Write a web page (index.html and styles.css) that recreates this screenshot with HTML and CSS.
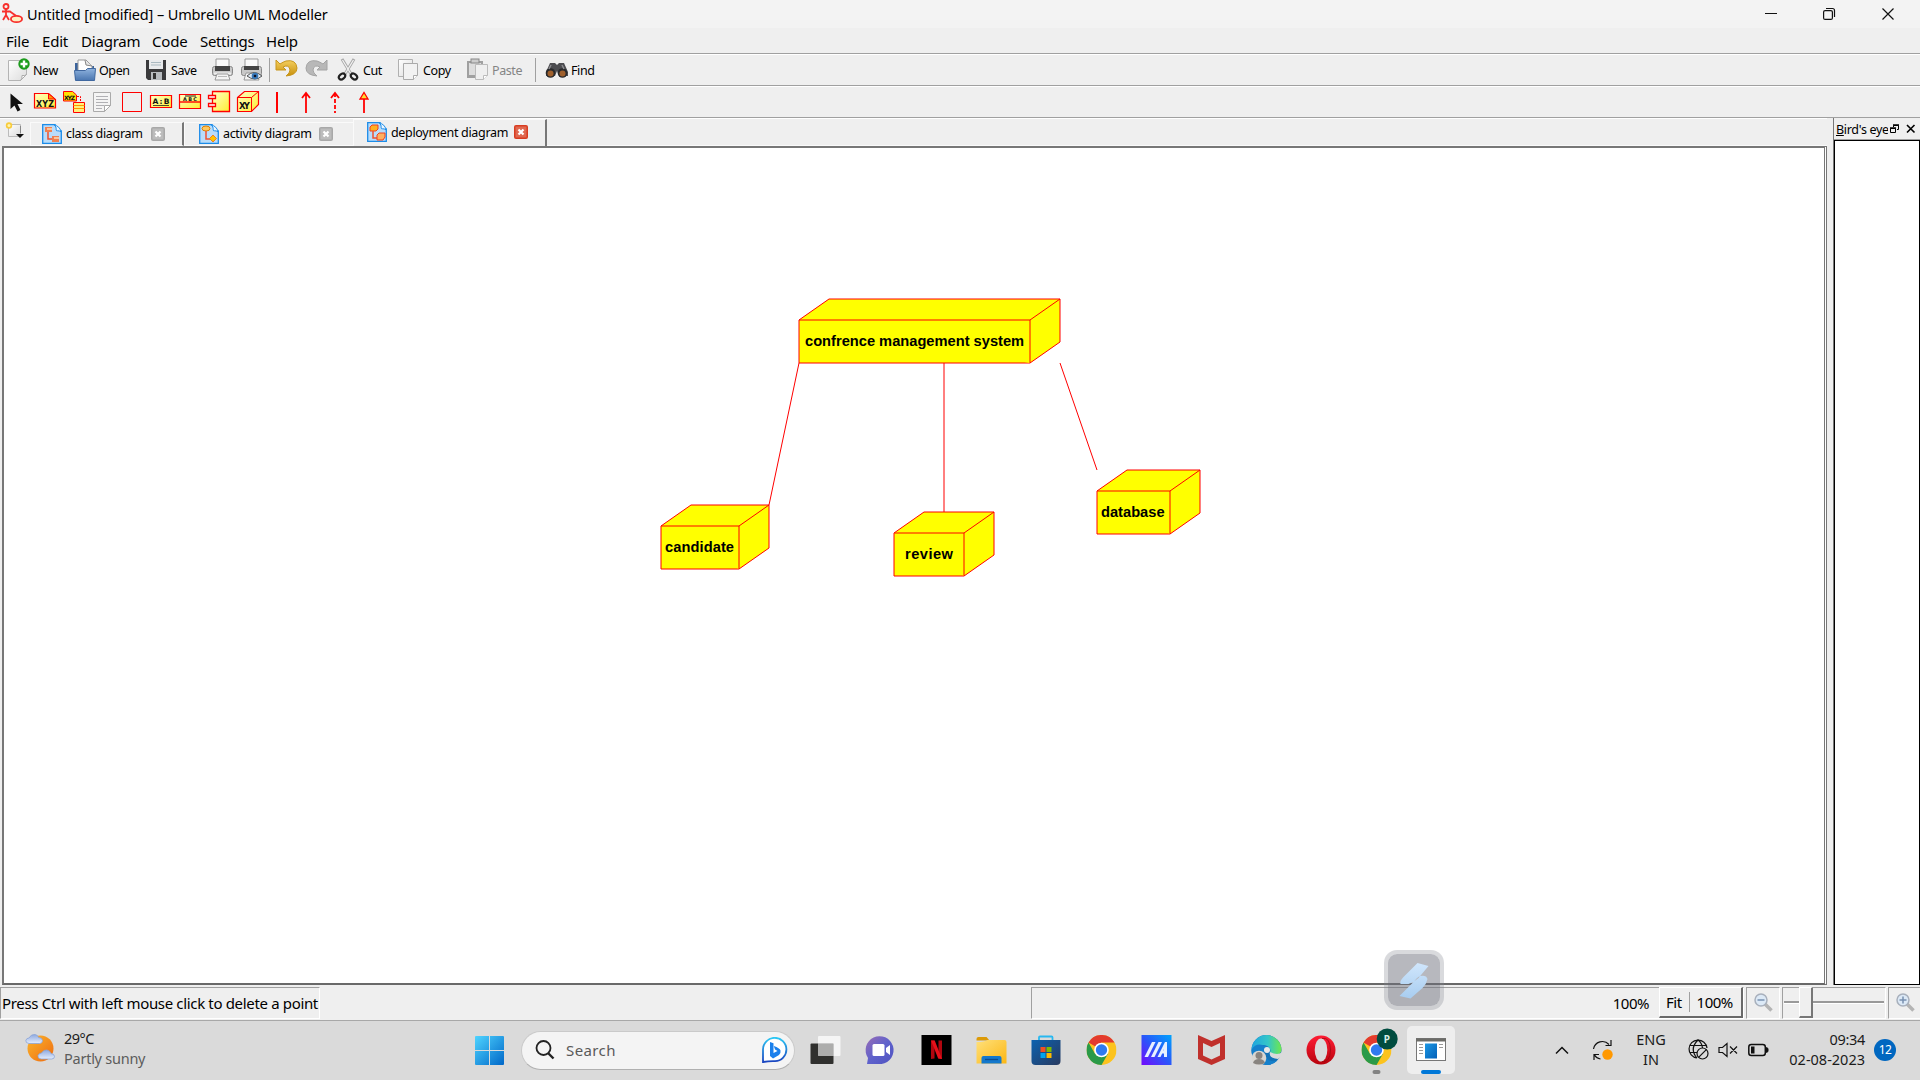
FILE: index.html
```html
<!DOCTYPE html>
<html lang="en">
<head>
<meta charset="utf-8">
<title>Untitled [modified] – Umbrello UML Modeller</title>
<link rel="stylesheet" href="styles.css">
</head>
<body>
<svg class="defs" width="0" height="0">
  <defs>
    <linearGradient id="paper" x1="0" y1="0" x2="1" y2="1"><stop offset="0" stop-color="#fff"/><stop offset="1" stop-color="#dcdcdc"/></linearGradient>
    <linearGradient id="folderBlue" x1="0" y1="0" x2="0" y2="1"><stop offset="0" stop-color="#8fb3de"/><stop offset="1" stop-color="#4a76b0"/></linearGradient>
    <linearGradient id="yel" x1="0" y1="0" x2="1" y2="1"><stop offset="0" stop-color="#ffffc8"/><stop offset="1" stop-color="#ffee30"/></linearGradient>
    <linearGradient id="gold" x1="0" y1="0" x2="0" y2="1"><stop offset="0" stop-color="#f5d060"/><stop offset="1" stop-color="#c8900c"/></linearGradient>
    <linearGradient id="win" gradientUnits="userSpaceOnUse" x1="0" y1="0" x2="29" y2="29"><stop offset="0" stop-color="#4fd4ff"/><stop offset="1" stop-color="#0067c8"/></linearGradient>
    <linearGradient id="sun" x1="0" y1="0" x2="1" y2="1"><stop offset="0" stop-color="#fbb62c"/><stop offset="1" stop-color="#ee6a10"/></linearGradient>
    <linearGradient id="cloud" x1="0" y1="0" x2="0" y2="1"><stop offset="0" stop-color="#8ea9e0"/><stop offset="1" stop-color="#e4edfc"/></linearGradient>
    <linearGradient id="bing" x1="0" y1="0" x2="0" y2="1"><stop offset="0" stop-color="#2cc8f4"/><stop offset="1" stop-color="#1a44c0"/></linearGradient>
    <linearGradient id="chat" x1="0" y1="0" x2="1" y2="1"><stop offset="0" stop-color="#9a6cb4"/><stop offset=".5" stop-color="#5f62cc"/><stop offset="1" stop-color="#4f52c0"/></linearGradient>
    <linearGradient id="fold" x1="0" y1="0" x2="1" y2="1"><stop offset="0" stop-color="#ffe07a"/><stop offset="1" stop-color="#fcb714"/></linearGradient>
    <linearGradient id="store" x1="0" y1="0" x2="1" y2="1"><stop offset="0" stop-color="#0c62b0"/><stop offset="1" stop-color="#283a60"/></linearGradient>
    <linearGradient id="armory" x1="1" y1="0" x2="0" y2="1"><stop offset="0" stop-color="#00a4fc"/><stop offset=".5" stop-color="#2a56fa"/><stop offset="1" stop-color="#7408fc"/></linearGradient>
    <linearGradient id="edgeTop" x1="0" y1="0" x2="1" y2="0"><stop offset="0" stop-color="#1fa4e0"/><stop offset=".55" stop-color="#34c6c8"/><stop offset="1" stop-color="#6ee84c"/></linearGradient>
    <linearGradient id="opera" x1="0" y1="0" x2="0" y2="1"><stop offset="0" stop-color="#ff1c34"/><stop offset="1" stop-color="#b8040e"/></linearGradient>
    <linearGradient id="appBlue" x1="0" y1="0" x2="1" y2="1"><stop offset="0" stop-color="#1c98e4"/><stop offset="1" stop-color="#0460b8"/></linearGradient>
    <linearGradient id="bolt" x1="0" y1="0" x2="0" y2="1"><stop offset="0" stop-color="#d0e6fc"/><stop offset="1" stop-color="#a8cdf0"/></linearGradient>
    <symbol id="pagelet" viewBox="0 0 20 20">
      <path d="M.7.7H13L19.3 7V19.3H.7Z" fill="#b9dcfa" stroke="#1c8ce8" stroke-width="1.3"/>
      <path d="M12 1c3 1 2 5 7 6V1Z" fill="#f0f0f0"/><path d="M12 .8c4 1 6 3 7.200 7-3-2-5 0-5-2S14 2 12 .8Z" fill="#eaf5ff" stroke="#1c8ce8"/>
    </symbol>
    <symbol id="close" viewBox="0 0 14 14"><rect width="14" height="14" rx="2" fill="#a8a8a8"/><rect x="1.500" y="1.500" width="11" height="11" fill="#bcbcbc"/><path d="M4.500 4.500l5 5m0-5l-5 5" stroke="#fff" stroke-width="2.200"/></symbol>
    <symbol id="chrome" viewBox="0 0 30 30">
      <circle cx="15" cy="15" r="15" fill="#fcc31e"/>
      <path d="M15 15L2 7.500A15 15 0 0 1 28 7.500H15Z" fill="#e33b2e"/>
      <path d="M2 7.500A15 15 0 0 0 15 30L21.500 18.700 15 15 8.500 18.700Z" fill="#2a9a48"/>
      <circle cx="15" cy="15" r="7.300" fill="#fff"/><circle cx="15" cy="15" r="5.700" fill="#2f7af0"/>
    </symbol>
  </defs>
</svg>

<div class="window">
  <header class="titlebar">
    <svg class="app-icon" width="22" height="22" viewBox="0 0 22 22"><g fill="none" stroke="#f8302c" stroke-width="1.800"><circle cx="4" cy="3.500" r="2.500"/><path d="M4 6v6M0 8.500h8.500M1 17l3-5 3 5M8 8.500l7 5"/><ellipse cx="14.500" cy="16" rx="5.600" ry="3.200" fill="#fff0c0"/></g></svg>
    <span class="title-text">Untitled [modified] – Umbrello UML Modeller</span>
    <div class="win-controls">
      <svg width="58" height="28"><path d="M20 13.500h12" stroke="#111"/></svg>
      <svg width="58" height="28"><g fill="none" stroke="#111" stroke-width="1.200"><rect x="19.600" y="10.600" width="8.800" height="8.800" rx="1.500"/><path d="M22 8.500h6.500q2 0 2 2V17"/></g></svg>
      <svg width="58" height="28"><path d="M20.500 8.500l11 11m0-11l-11 11" stroke="#111" stroke-width="1.200"/></svg>
    </div>
  </header>

  <nav class="menubar">
    <span class="m-file">File</span><span class="m-edit">Edit</span><span class="m-diagram">Diagram</span><span class="m-code">Code</span><span class="m-settings">Settings</span><span class="m-help">Help</span>
  </nav>

  <div class="toolbar main-tools">
    <div class="tool w66"><svg width="24" height="24"><path d="M1.500 2.500h18v14l-6 6h-12Z" fill="url(#paper)" stroke="#b4b4b4"/><path d="M13.500 22.500q2-2 1.500-5 3 .5 4.500-1Z" fill="#fff" stroke="#aaa"/><circle cx="17" cy="6" r="5.700" fill="#1c9c1c"/><path d="M17 2.500v7M13.500 6h7" stroke="#fff" stroke-width="2.400"/></svg><span>New</span></div>
    <div class="tool w72"><svg width="24" height="24"><path d="M2 5h6l3 3h10v14H2Z" fill="#3c649c"/><path d="M5 14V2h8l6 6v7" fill="#fff" stroke="#999"/><path d="M12 2l1 5 6 1" fill="#e4e4e4" stroke="#888"/><path d="M1.500 12.500h11l2-2h8l-1 12h-19Z" fill="url(#folderBlue)" stroke="#4068a0"/></svg><span>Open</span></div>
    <div class="tool w66"><svg width="24" height="24"><path d="M1 2h20v20H3l-2-2Z" fill="#3a3a3c"/><rect x="4" y="2" width="14" height="9" fill="#e8eaec"/><path d="M6 4.500h10M6 7h10" stroke="#a8b8c0"/><rect x="6" y="14" width="11" height="8" fill="#b8bcc0"/><rect x="8" y="15" width="3" height="6" fill="#333"/></svg><span>Save</span></div>
    <div class="tool w29"><svg width="24" height="24"><path d="M5 9V1h13v8" fill="#fafafa" stroke="#999"/><rect x="1.500" y="8.500" width="20" height="9" rx="2" fill="#c8c8c8" stroke="#888"/><rect x="4" y="8" width="15" height="5" fill="#444"/><path d="M3 15.500h17" stroke="#eee" stroke-width="2"/><path d="M6 16h11l2 6H4Z" fill="#f4f4f4" stroke="#999"/><path d="M7 18.500h9" stroke="#bbb"/></svg></div>
    <div class="tool w29"><svg width="24" height="24"><path d="M5 9V1h13v8" fill="#fafafa" stroke="#999"/><rect x="1.500" y="8.500" width="20" height="9" rx="2" fill="#c8c8c8" stroke="#888"/><rect x="4" y="8" width="15" height="4" fill="#444"/><path d="M6 15h11l2 7H4Z" fill="#f4f4f4" stroke="#999"/><path d="M7 18q7-7 15 0-7 6-15 0Z" fill="#dce8f4" stroke="#555"/><circle cx="15" cy="18" r="3.300" fill="#3878b8"/><circle cx="15" cy="18" r="1.300" fill="#112"/></svg></div>
    <i class="sep"></i>
    <div class="tool w30"><svg width="24" height="24"><path d="M1 2v10h10L8 9q6-3 7 3 0 3-4 6 11-1 11-8Q21 1 11 3q-3 1-6 3Z" fill="url(#gold)" stroke="#c8961c"/></svg></div>
    <div class="tool w32"><svg width="24" height="24"><path d="M22 2v10H12l3-3q-6-3-7 3 0 3 4 6Q1 17 1 10 2 1 12 3q3 1 6 3Z" fill="#b8b8b8" stroke="#a4a4a4"/></svg></div>
    <div class="tool w60"><svg width="24" height="24"><path d="M5 1l9 15M17 1L8 16" stroke="#a8a8a8" stroke-width="3"/><path d="M5.500 2l8.500 14M16.500 2L8 16" stroke="#f4f4f4" stroke-width="1.200"/><g fill="none" stroke="#222" stroke-width="2.200"><ellipse cx="5" cy="18.500" rx="3.500" ry="2.500" transform="rotate(-40 5 18.500)"/><ellipse cx="17" cy="18.500" rx="3.500" ry="2.500" transform="rotate(40 17 18.500)"/></g></svg><span>Cut</span></div>
    <div class="tool w69"><svg width="24" height="24"><path d="M1.500 1.500h14v17h-14Z" fill="url(#paper)" stroke="#b0b0b0"/><path d="M6.500 5.500h14v12l-4 4h-10Z" fill="#f2f2f2" stroke="#aaa"/><path d="M16.500 21.500v-4h4" fill="#fff" stroke="#aaa"/></svg><span>Copy</span></div>
    <div class="tool off w68"><svg width="24" height="24"><path d="M1 3h16v17H1Z" fill="#a0a0a0"/><path d="M3 5h12v12H3Z" fill="#ddd"/><rect x="5" y="1" width="8" height="4" fill="#ccc" stroke="#888"/><path d="M9.500 6.500h12v11l-4 4h-8Z" fill="#efefef" stroke="#bbb"/><path d="M17.500 21.500v-4h4" fill="#fff" stroke="#bbb"/></svg><span>Paste</span></div>
    <i class="sep wide"></i>
    <div class="tool"><svg width="24" height="24"><path d="M5 5h5l2 2 2-2h5l4 9v4h-9l-2-5-2 5H1v-4Z" fill="#4c4c50"/><circle cx="5.500" cy="15" r="4.800" fill="#2a2a2c"/><circle cx="17.500" cy="15" r="4.800" fill="#2a2a2c"/><circle cx="5.500" cy="15.500" r="3" fill="#a0602c"/><circle cx="17.500" cy="15.500" r="3" fill="#a0602c"/><path d="M6 7l-2 4M17 7l2 4" stroke="#8c8c90" stroke-width="1.500"/></svg><span>Find</span></div>
  </div>

  <div class="toolbar shape-tools">
    <svg width="29" height="24"><path d="M8.500 3.500v15.500l4-3.500 3 6 3-1.500-3-6h5.500Z" fill="#111"/></svg>
    <svg width="29" height="24"><path d="M3.500 3.500h14l7 6v8.500h-21Z" fill="url(#yel)" stroke="#f00" stroke-width="1.200"/><path d="M17.500 3.500v5.500h6.500Z" fill="#ff9a00" stroke="#f00"/><text class="glyph" x="5" y="17" font-size="8" textLength="18">XYZ</text></svg>
    <svg width="29" height="24"><path d="M3.500 1.500h9l4 3.500v6h-13Z" fill="#ffe000" stroke="#f00"/><text class="glyph" x="4" y="9.500" font-size="6" textLength="11">XYZ</text><path d="M17 6.500h3.500v5" fill="none" stroke="#f00" stroke-dasharray="2 1"/><path d="M13.500 12.500h11v10h-11Z" fill="#fff27c" stroke="#f00"/><path d="M13.500 15.500h11M13.500 18.500h11" stroke="#f90"/></svg>
    <svg width="29" height="24"><path d="M4.500 2.500h17v13l-6 6h-11Z" fill="#f4f4f4" stroke="#aaa"/><path d="M7 6.500h12M7 9.500h12M7 12.500h12M7 15.500h8M7 18.500h6" stroke="#b0b0b4"/><path d="M15.500 21.500v-6h6Z" fill="#fff" stroke="#aaa"/></svg>
    <svg width="29" height="24"><path d="M4.500 2.500h19v19h-19Z" fill="none" stroke="#f00"/></svg>
    <svg width="29" height="24"><path d="M3.500 5.500h21v12h-21Z" fill="url(#yel)" stroke="#f00" stroke-width="1.200"/><text class="glyph" x="5.500" y="14" font-size="7.500" textLength="17">A:B</text><path d="M6 15.500h16" stroke="#222" stroke-width=".8"/></svg>
    <svg width="29" height="24"><path d="M3.500 4.500h21v14h-21Z" fill="url(#yel)" stroke="#f00" stroke-width="1.200"/><path d="M3 12h22" stroke="#f00" stroke-width="1.400"/><text class="glyph" x="7" y="11" font-size="5" textLength="14">ABC</text><path d="M9 6h11" stroke="#222"/></svg>
    <svg width="29" height="24"><path d="M7.500 1.500h17v20h-17Z" fill="url(#yel)" stroke="#f00" stroke-width="1.300"/><path d="M3.500 5.500h7v3h-7ZM3.500 13.500h7v3h-7Z" fill="#fff" stroke="#f00" stroke-width="1.300"/></svg>
    <svg width="29" height="24"><path d="M3.500 7.500l7-6h14v13l-7 7h-14Z" fill="url(#yel)" stroke="#f00" stroke-width="1.200"/><path d="M3.500 7.500h14v14M17.500 7.500l7-6" fill="none" stroke="#f00"/><text class="glyph" x="5" y="18.500" font-size="8.500" textLength="11">XY</text></svg>
    <svg width="29" height="24"><path d="M14 2v21" stroke="#f00" stroke-width="2"/></svg>
    <svg width="29" height="24"><path d="M14 3v20M10 8l4-5 4 5" fill="none" stroke="#f00" stroke-width="1.800"/></svg>
    <svg width="29" height="24"><path d="M14 3v20" stroke="#f00" stroke-width="1.800" stroke-dasharray="4 2"/><path d="M10 8l4-5 4 5" fill="none" stroke="#f00" stroke-width="1.800"/></svg>
    <svg width="29" height="24"><path d="M14 9v14" stroke="#f00" stroke-width="1.800"/><path d="M10 9l4-6.500 4 6.500Z" fill="#fd3" stroke="#f00" stroke-width="1.300"/></svg>
  </div>

  <main class="work">
    <section class="editor">
      <div class="tabs">
        <div class="newtab"><svg width="20" height="20"><path d="M3.500 2.500h12v12h-12Z" fill="url(#paper)" stroke="#bbb"/><path d="M15.500 4v7" stroke="#888"/><circle cx="4" cy="3.500" r="3.200" fill="#f8cc3c"/><circle cx="4" cy="3.500" r="1.500" fill="#fff4b0"/><path d="M11 12h8l-4 4Z" fill="#111"/></svg></div>
        <div class="tab t1"><svg width="20" height="20"><use href="#pagelet"/><path d="M3 3h7v5H3ZM10 12h7v6h-7Z" fill="#f08050"/><path d="M5 4h5v2H5ZM12 13h5v2h-5Z" fill="#fbc49c"/><path d="M6 8v7h4" fill="none" stroke="#f05030" stroke-width="1.500"/></svg><span>class diagram</span><svg class="x" width="14" height="14"><use href="#close"/></svg></div>
        <div class="tab t2"><svg width="20" height="20"><use href="#pagelet"/><ellipse cx="7" cy="4.500" rx="4" ry="2.500" fill="#fdc860" stroke="#e08000"/><path d="M7 7v8h4" fill="none" stroke="#f05030" stroke-width="1.500"/><path d="M14 11l3.500 3.500-3.500 3.500-3.500-3.500Z" fill="#ffc400" stroke="#f08020"/></svg><span>activity diagram</span><svg class="x" width="14" height="14"><use href="#close"/></svg></div>
        <div class="tab active"><svg width="20" height="20"><use href="#pagelet"/><path d="M3 5l2-2h6v4L9 9H3Z" fill="#ffb020" stroke="#f04020"/><path d="M6 9v7h4" fill="none" stroke="#f05030" stroke-width="1.500"/><path d="M10 13l2-2h6v4l-2 3h-6Z" fill="#ffb060" stroke="#f04020"/></svg><span>deployment diagram</span><svg class="x" width="14" height="14"><rect width="14" height="14" rx="2" fill="#d83c20"/><rect x="1.500" y="1.500" width="11" height="11" fill="#e06850"/><path d="M4.500 4.500l5 5m0-5l-5 5" stroke="#fff" stroke-width="2.200"/></svg></div>
        <div class="tab-rest"></div>
      </div>
      <div class="canvas">
        <svg width="1820" height="833" viewBox="4 148 1820 833">
          <g class="node">
            <path d="M799 320L829 299H1060V342L1030 363H799Z"/><path d="M799 320H1030V363M1030 320L1060 299"/>
            <path d="M661 526L691 505H769V548L739 569H661Z"/><path d="M661 526H739V569M739 526L769 505"/>
            <path d="M894 533L924 512H994V555L964 576H894Z"/><path d="M894 533H964V576M964 533L994 512"/>
            <path d="M1097 491L1127 470H1200V513L1170 534H1097Z"/><path d="M1097 491H1170V534M1170 491L1200 470"/>
          </g>
          <path class="link" d="M799 363L769 505M944 363V512M1060 363L1097 470"/>
          <g class="node-name">
            <text x="805" y="346">confrence management system</text>
            <text x="665" y="552" textLength="69">candidate</text>
            <text x="905" y="559" textLength="48">review</text>
            <text x="1101" y="517">database</text>
          </g>
        </svg>
      </div>
    </section>
    <aside class="dock">
      <div class="dock-title"><span class="dock-name"><u>B</u>ird's eye</span>
        <svg width="10" height="10"><path d="M3.500 3V1.500h5V5.500H7M.5 4.500h5v4h-5Z" fill="none" stroke="#000"/><path d="M3 1h6M0 4h6" stroke="#000" stroke-width="1.500"/></svg>
        <svg width="10" height="10"><path d="M1 1l7.500 7.500m0-7.500L1 8.500" stroke="#000" stroke-width="1.600"/></svg>
      </div>
      <div class="dock-view"></div>
    </aside>
  </main>

  <footer class="status">
    <div class="cell msg">Press Ctrl with left mouse click to delete a point</div>
    <div class="cell zoom-cell"><span class="pct">100%</span><div class="fit"><span class="fit-label">Fit</span><i></i><span>100%</span></div></div>
    <div class="cell zout"><svg width="20" height="20"><path d="M11 11l6.500 6.500" stroke="#b4b4b4" stroke-width="3.500"/><circle cx="7" cy="7" r="6" fill="#dce9f6" stroke="#a8b0bc" stroke-width="1.500"/><path d="M3.500 7h7" stroke="#7890b0" stroke-width="1.500"/></svg></div>
    <div class="cell slider"><i class="groove"></i><i class="thumb"></i></div>
    <div class="cell zin"><svg width="20" height="20"><path d="M11 11l6.500 6.500" stroke="#b4b4b4" stroke-width="3.500"/><circle cx="7" cy="7" r="6" fill="#dce9f6" stroke="#a8b0bc" stroke-width="1.500"/><path d="M3.500 7h7M7 3.500v7" stroke="#7890b0" stroke-width="1.500"/></svg></div>
  </footer>
</div>

<footer class="taskbar">
  <div class="weather">
    <svg width="32" height="32"><circle cx="15.500" cy="15.500" r="13" fill="url(#sun)"/><path d="M4 10.500q-3.500-.5-3.200-3Q1.500 5 4 5q2-4 6-3.500Q13 2 13.500 4.500q3.500 0 4 3 0 3-3 3Z" fill="url(#cloud)" stroke="#8aa4d8" stroke-width=".8"/><path d="M16 26q-3.500-.5-3-3.500Q14 20 16.500 20q2-3.500 5.500-3 3 .5 4 3.500 3.500.5 3.500 3 0 2.500-3 2.500Z" fill="url(#cloud)" stroke="#8aa4d8" stroke-width=".8"/></svg>
    <div class="weather-text"><span class="temp">29°C</span><span class="sky">Partly sunny</span></div>
  </div>
  <svg class="start" width="29" height="29"><g fill="url(#win)"><path d="M1 0h13v14H0V1q0-1 1-1ZM15 0h13q1 0 1 1v13H15ZM0 15h14v14H1q-1 0-1-1ZM15 15h14v13q0 1-1 1H15Z"/></g></svg>
  <div class="search">
    <svg width="20" height="20"><circle cx="8.500" cy="8" r="7" fill="none" stroke="#222" stroke-width="1.800"/><path d="M13 13l5.500 5.500" stroke="#222" stroke-width="2.400"/></svg>
    <span>Search</span>
    <svg width="26" height="26"><path d="M1 25V12.500A11.700 11.700 0 1 1 13 24.200Q7 24 1 25Z" fill="#fff" stroke="url(#bing)" stroke-width="1.800"/><path d="M8 5l3.500 1.300V16l4-2-2.500-1.500-1.200-3.500q6 2 6.700 4.500.5 3-1.500 4.500l-6 3.500L8 19Z" fill="#1c80ec"/></svg>
  </div>
  <div class="apps">
    <svg width="55" height="40"><rect x="11.500" y="13.500" width="23" height="20.500" rx="1" fill="#30302e"/><rect x="19" y="6" width="22.500" height="20" rx="1" fill="#fff" fill-opacity=".72"/><rect x="19" y="13.500" width="15.500" height="12.500" fill="#a4a4a4" fill-opacity=".75"/></svg>
    <svg width="55" height="40"><path d="M13 34l1-6A14 14 0 1 1 27.500 34Z" fill="url(#chat)"/><rect x="18.500" y="14" width="12" height="12" rx="1.500" fill="#fff"/><path d="M32 18l4-3v10l-4-3Z" fill="#fff"/></svg>
    <svg width="55" height="40"><path d="M12.500 5h30v30h-30Z" fill="#000"/><path d="M22 10.500h3.500v18l-3.500.5ZM29.500 10.500H33V29l-3.500-.5Z" fill="#b1060f"/><path d="M22 10.500h3.700L33 29l-3.800-.5Z" fill="#e8101a"/></svg>
    <svg width="55" height="40"><path d="M12.500 9q0-2 2-2h8l3 3.500h-13Z" fill="#dc9a08"/><path d="M12.500 12q8 0 11-2h17q2 0 2 2v21.500h-30Z" fill="url(#fold)"/><path d="M17.500 33.500V28q0-2 2-2h16q2 0 2 2v5.500Z" fill="#1478cc"/><path d="M21 29.500h13" stroke="#0c4c90" stroke-width="1.300"/></svg>
    <svg width="55" height="40"><path d="M20 11V7.500q0-1 1-1h11.500q1 0 1 1V11" fill="none" stroke="#28b8f0" stroke-width="1.800"/><path d="M12.500 10h29v21q0 4-4 4h-21q-4 0-4-4Z" fill="url(#store)"/><path d="M21.500 17h5v5h-5Z" fill="#f25022"/><path d="M27.500 17h5v5h-5Z" fill="#7fba00"/><path d="M21.500 23h5v5h-5Z" fill="#00a4ef"/><path d="M27.500 23h5v5h-5Z" fill="#ffb900"/></svg>
    <svg width="55" height="40"><use href="#chrome" x="12.500" y="5" width="30" height="30"/></svg>
    <svg width="55" height="40"><path d="M12.500 5h30v30h-30Z" fill="url(#armory)"/><path d="M15.500 27l7.500-15h3.500L19 27ZM22 27l7.500-15H33L25.500 27Z" fill="#e8f0ff"/><path d="M28.500 27L36 12h2v15h-3v-3.500h-1.800L31.500 27ZM34.500 20.500h.5v-1.500Z" fill="#e8f0ff"/></svg>
    <svg width="55" height="40"><path d="M14 5l13.500 6L41 5v24l-13.500 6L14 29Z" fill="#c0302c"/><path d="M19 13l8.500 4 8.500-4v12.500l-8.500 4-8.500-4Z" fill="#dadada"/></svg>
    <svg width="55" height="40"><circle cx="27.500" cy="20" r="15" fill="#1272b8"/><path d="M12.500 20a15 15 0 0 1 30 0q-1 6-8 5-5-1-3-4 0-5-7-6-9 0-12 5Z" fill="url(#edgeTop)"/><path d="M12.500 20q4-7 11-5 7 1 8 6-1-3-4-2-4 2-2 7 4 7 13 4.500-5 5-12 4.500Q12 32 12.500 20Z" fill="#1580cc"/><path d="M31 22q-2 6 8 7l4-3v-4q-4 4-12 0Z" fill="#dadada"/><circle cx="28" cy="20" r="3" fill="#e8e8e8"/><circle cx="20" cy="28" r="7.300" fill="#d8d6d2"/><circle cx="20" cy="25.500" r="3.500" fill="#888480"/><path d="M14 33q1-4 6-4t6 4q-6 3-12 0Z" fill="#888480"/></svg>
    <svg width="55" height="40"><circle cx="27" cy="20" r="14.500" fill="url(#opera)"/><ellipse cx="27" cy="20" rx="6.300" ry="11.500" fill="#dadada"/><path d="M28 8.500q8-2 8.500 11.500-.5 13-8.500 11.500" fill="none" stroke="#980810" stroke-width=".7"/></svg>
    <div class="profile"><svg width="55" height="58"><use href="#chrome" x="12.500" y="14" width="30" height="30"/><circle cx="38.200" cy="18" r="10.500" fill="#004c3f"/><text x="34.700" y="22" class="profile-p">P</text><rect x="23.500" y="49" width="8" height="4" rx="2" fill="#838383"/></svg></div>
    <div class="current"><svg width="48" height="48"><rect x="9.500" y="12.500" width="29" height="22" fill="#fff" stroke="#777"/><path d="M9 14h30" stroke="#6c6c68" stroke-width="3"/><rect x="18" y="17.500" width="12" height="15" fill="url(#appBlue)"/><path d="M12 18.500h4M12 21.500h4M12 24.500h4M12 27.500h4M32 18.500h4M32 21.500h4" stroke="#999"/><rect x="14" y="44" width="20" height="4" rx="2" fill="#0078d8"/></svg></div>
  </div>
  <div class="tray">
    <svg class="chev" width="16" height="12"><path d="M2 9.500l6-6 6 6" fill="none" stroke="#111" stroke-width="1.500"/></svg>
    <svg class="sync" width="22" height="22"><path d="M1.500 10A9 9 0 0 1 17 5.500M19 1v5.500h-5.500M7 15.500H2V21M2.500 16q2 3.500 6 4" fill="none" stroke="#111" stroke-width="1.200"/><circle cx="15.500" cy="15.500" r="5.200" fill="#ff9800"/></svg>
    <div class="lang"><span>ENG</span><span>IN</span></div>
    <svg class="net" width="22" height="22"><g fill="none" stroke="#111" stroke-width="1.200"><path d="M19 9A9 9 0 1 0 9 19M10 1q-9 9-1 18M10 1q4 3 4.500 8M2 6.500h16M2 13.500h7"/><circle cx="14.500" cy="14.500" r="5.500"/><path d="M10.800 18.200l7.500-7.500"/></g></svg>
    <svg class="vol" width="22" height="16"><path d="M1 5.500h3.500l4.500-4v13l-4.500-4H1Z M12 4.500l7 7m0-7l-7 7" fill="none" stroke="#111" stroke-width="1.200"/></svg>
    <svg class="bat" width="22" height="14"><rect x=".8" y="1.500" width="16.500" height="11" rx="2.500" fill="none" stroke="#111" stroke-width="1.500"/><rect x="3" y="3.500" width="3.500" height="7" fill="#111"/><path d="M18.500 4.500v5l1.500-1v-3Z" fill="#111" stroke="#111"/></svg>
    <div class="clock"><span class="time">09:34</span><span class="date">02-08-2023</span></div>
    <div class="count">12</div>
  </div>
</footer>

<div class="floating"><svg width="52" height="52"><path d="M32 10l11 3-10 12q-4 4-10 6h-8q-1-3 3-7ZM42 26q-1-3-3-3-6-1-10 5L14 43l11 2.500L37 35q4-4 5-9Z" transform="translate(-2.500 -1)" fill="url(#bolt)"/></svg></div>
</body>
</html>
```
FILE: styles.css
```css
* { box-sizing: border-box; }
body { margin: 0; width: 1920px; height: 1080px; overflow: hidden; background: #efefef; color: #000; font: 15px/20px "Noto Sans", "Open Sans", sans-serif; white-space: nowrap; display: flex; flex-direction: column; }
svg { display: block; flex: none; }
.defs { position: absolute; }
.window { height: 1021px; flex: none; display: flex; flex-direction: column; border-bottom: 1px solid #a8a8a8; }

.titlebar { height: 28px; flex: none; background: #f3f3f3; display: flex; align-items: center; padding-left: 2px; font-size: 14.500px; }
.app-icon { margin-right: 3px; }
.title-text { letter-spacing: -.13px; }
.win-controls { margin-left: auto; display: flex; padding-right: 0; }
.win-controls svg { width: 58px; margin-left: .5px; }

.menubar { height: 26px; flex: none; display: flex; align-items: center; padding-left: 6px; border-bottom: 1px solid #a0a0a0; letter-spacing: -.2px; }
.m-file { width: 36px; }
.m-edit { width: 39px; }
.m-diagram { width: 71px; }
.m-code { width: 48px; }
.m-settings { width: 66px; letter-spacing: -.35px; }

.toolbar { height: 32px; flex: none; display: flex; align-items: center; border-top: 1px solid #fff; border-bottom: 1px solid #a0a0a0; }
.main-tools { padding-left: 7px; font-size: 12.500px; letter-spacing: -.4px; }
.tool { display: flex; align-items: center; gap: 2px; }
.tool span { padding-top: 2px; }
.off { color: #848484; }
.w29 { width: 29px; }
.w30 { width: 30px; }
.w32 { width: 32px; }
.w60 { width: 60px; }
.w66 { width: 66px; }
.w68 { width: 68px; }
.w69 { width: 69px; }
.w72 { width: 72px; }
.sep { width: 6px; height: 24px; border-left: 1px solid #a0a0a0; }
.sep.wide { width: 10px; margin-left: 1px; }
.shape-tools { padding-left: 2px; }
.glyph { font-family: "DejaVu Sans", sans-serif; font-weight: bold; fill: #111; }

.work { height: 867px; flex: none; display: flex; }
.editor { width: 1827px; border-top: 1px solid #fff; }
.tabs { height: 27px; display: flex; align-items: flex-end; font-size: 12.500px; letter-spacing: -.32px; }
.newtab { width: 30px; height: 24px; padding-left: 5px; }
.tab { height: 24px; display: flex; align-items: center; gap: 4px; border-top: 1px solid #fafafa; border-bottom: 1px solid #fafafa; border-left: 1px solid #fafafa; }
.tab .x { margin-left: auto; }
.t1 { width: 154px; padding: 0 17px 0 11px; border-right: 2px solid #777; }
.t2 { width: 169px; padding: 0 20px 0 14px; }
.active { width: 194px; height: 27px; padding: 0 17px 2px 13px; border-bottom: 0; border-right: 2px solid #777; }
.active span { padding-top: 2px; }
.tab-rest { flex: 1; height: 24px; border-bottom: 1px solid #fafafa; }
.canvas { margin-left: 2px; height: 839px; width: 1825px; background: #fff; border-style: solid; border-width: 2px 3px 3px 2px; border-color: #777 #777 #666 #777; border-right: 3px double #777; border-bottom: 2px solid #696969; overflow: hidden; }
.node { fill: #ff0; stroke: #f00; stroke-width: 1; }
.link { fill: none; stroke: #f00; stroke-width: 1; }
.node-name { font: bold 14.670px "Liberation Sans", Arial, sans-serif; }

.dock { flex: 1; margin-left: 6px; border-left: 1px solid #777; display: flex; flex-direction: column; }
.dock-title { height: 22px; display: flex; align-items: center; padding-left: 2px; gap: 6px; font-size: 12.500px; letter-spacing: -.3px; border-bottom: 1px solid #a0a0a0; }
.dock-name { width: 52px; margin-right: -4px; padding-top: 2px; overflow: hidden; }
.dock-title svg { margin-right: 0; }
.dock-view { flex: 1; background: #fff; border: 1px solid #000; }

.status { height: 34px; flex: none; display: flex; align-items: center; padding-top: 1px; }
.cell { height: 32px; border: 1px solid #fff; border-top-color: #a0a0a0; border-left-color: #a0a0a0; display: flex; align-items: center; }
.msg { width: 320px; padding-left: 1px; letter-spacing: -.34px; }
.zoom-cell { width: 713px; margin-left: 711px; justify-content: flex-end; }
.pct { margin-right: 10px; }
.fit { width: 84px; height: 31px; display: flex; align-items: center; border: 1px solid #fff; border-right: 2px solid #696969; border-bottom: 2px solid #696969; padding-left: 6px; gap: 7px; }
.fit i { height: 20px; border-left: 1px solid #a0a0a0; }
.zoom-cell, .fit { letter-spacing: -.5px; }
.zout { width: 34px; margin-left: 2px; padding-left: 7px; }
.slider { width: 104px; margin-left: 2px; padding: 0 1px; }
.groove { flex: 1; height: 3px; border-top: 2px solid #999; border-bottom: 1px solid #fff; }
.thumb { width: 14px; height: 31px; margin-left: -85px; margin-right: 71px; background: #efefef; border: 1px solid #fff; border-right: 2px solid #777; border-bottom: 2px solid #777; }
.zin { width: 32px; margin-left: 2px; padding-left: 7px; border-right: 0; }

.taskbar { height: 59px; flex: none; background: #dadada; display: flex; align-items: center; color: #1b1b1b; font-size: 14.500px; padding-bottom: 1px; }
.weather { width: 450px; padding-left: 25px; display: flex; gap: 7px; }
.weather > svg { margin-top: 1px; }
.weather-text { display: flex; flex-direction: column; margin-top: -4px; }
.temp { letter-spacing: -.5px; }
.sky { color: #5c5c5c; letter-spacing: -.25px; }
.start { margin: 0 17px 0 25px; }
.search { width: 274px; height: 39px; border-radius: 20px; background: #f4f4f4; border: 1px solid #cacaca; border-bottom-color: #b0b0b0; display: flex; align-items: center; padding: 0 6px 0 13px; color: #5a5a5a; }
.search span { flex: 1; margin-left: 11px; font-size: 15px; letter-spacing: .4px; }
.apps { display: flex; align-items: center; margin-left: 4px; }
.current { width: 48px; height: 48px; margin-left: 3px; background: #eeeeee; border-radius: 5px; }
.tray { margin-left: auto; display: flex; align-items: center; padding-right: 24px; }
.chev { margin-right: 22px; }
.sync { margin-right: 19px; }
.lang { width: 36px; text-align: center; margin: -2px 19px 0 0; display: flex; flex-direction: column; }
.net { margin-right: 8px; }
.vol { margin-right: 8px; }
.clock { width: 95px; margin: -2px 9px 0 0; display: flex; flex-direction: column; text-align: right; }
.time { letter-spacing: -.3px; }
.count { width: 22px; height: 22px; border-radius: 50%; background: #0067c0; color: #fff; font-size: 12px; line-height: 22px; text-align: center; letter-spacing: -.5px; }
.profile-p { font: bold 10px "Noto Sans", sans-serif; fill: #d8f0e8; }

.floating { position: absolute; left: 1384px; top: 950px; width: 60px; height: 60px; border-radius: 13px; border: 4px solid rgba(130, 132, 142, .3); background: rgba(112, 114, 126, .5); background-clip: padding-box; }
```
